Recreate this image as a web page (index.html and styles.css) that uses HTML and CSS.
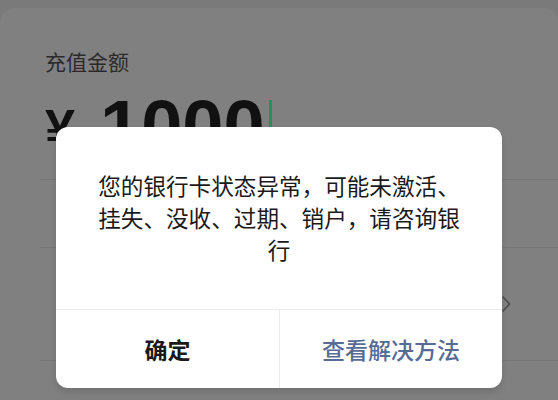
FILE: index.html
```html
<!DOCTYPE html>
<html lang="zh-CN">
<head>
<meta charset="utf-8">
<title>充值</title>
<link rel="stylesheet" href="styles.css">
</head>
<body>
<div class="card">
  <div class="label">充值金额</div>
  <div class="amount"><span class="yen">¥</span><span class="digits">1000</span><span class="cursor"></span></div>
  <div class="divider"></div>
  <div class="row"></div>
  <div class="divider"></div>
  <div class="row tall">
    <svg class="chevron" width="10" height="18" viewBox="0 0 10 18"><path d="M1.5 1.5 L8.5 9 L1.5 16.5" fill="none" stroke="#4e4e4e" stroke-width="1.6"/></svg>
  </div>
  <div class="divider"></div>
</div>
<div class="dialog">
  <div class="msg">您的银行卡状态异常，可能未激活、挂失、没收、过期、销户，请咨询银行</div>
  <div class="actions">
    <div class="btn ok">确定</div>
    <div class="btn link">查看解决方法</div>
  </div>
</div>
</body>
</html>
```
FILE: styles.css
```css
html, body {
  margin: 0;
  padding: 0;
}
body {
  width: 558px;
  height: 400px;
  overflow: hidden;
  background: #7a7a7a;
  font-family: "Noto Sans CJK SC", "Noto Sans", sans-serif;
  position: relative;
}
.card {
  margin-top: 8px;
  height: 392px;
  background: #808080;
  border-radius: 14px 14px 0 0;
  padding-left: 45px;
  box-sizing: border-box;
  padding-top: 38px;
}
.label {
  font-size: 21px;
  line-height: 30px;
  color: #2a2a2a;
}
.amount {
  margin-top: 14px;
  height: 89px;
  display: flex;
  align-items: flex-start;
  font-family: "Liberation Sans", Arial, sans-serif;
  font-weight: 700;
  color: #111;
}
.yen {
  font-size: 54px;
  line-height: 74px;
  margin-top: 1px;
  width: 55px;
}
.digits {
  font-size: 74px;
  line-height: 74px;
}
.cursor {
  width: 3px;
  height: 40px;
  background: #23915a;
  margin-top: 10px;
  margin-left: 4px;
}
.divider {
  height: 1px;
  background: #767676;
  margin-left: -5px;
}
.row {
  height: 67px;
}
.row.tall {
  height: 112px;
  display: flex;
  align-items: center;
  justify-content: flex-end;
  padding-right: 47px;
}
.dialog {
  position: absolute;
  left: 56px;
  top: 127px;
  width: 446px;
  height: 261px;
  background: #fff;
  border-radius: 12px;
  box-shadow: 0 4px 6px rgba(0, 0, 0, 0.12);
  display: flex;
  flex-direction: column;
}
.msg {
  flex: 1;
  display: flex;
  align-items: center;
  justify-content: center;
  text-align: center;
  padding: 0 38px;
  font-size: 22.6px;
  line-height: 32px;
  color: #1a1a1a;
}
.actions {
  height: 78px;
  border-top: 1px solid #ececec;
  display: grid;
  grid-template-columns: 1fr 1fr;
}
.btn {
  display: flex;
  align-items: center;
  justify-content: center;
  font-size: 23px;
}
.ok {
  font-weight: 700;
  color: #1a1a1a;
}
.link {
  border-left: 1px solid #ececec;
  font-weight: 500;
  color: #576b95;
}
```
